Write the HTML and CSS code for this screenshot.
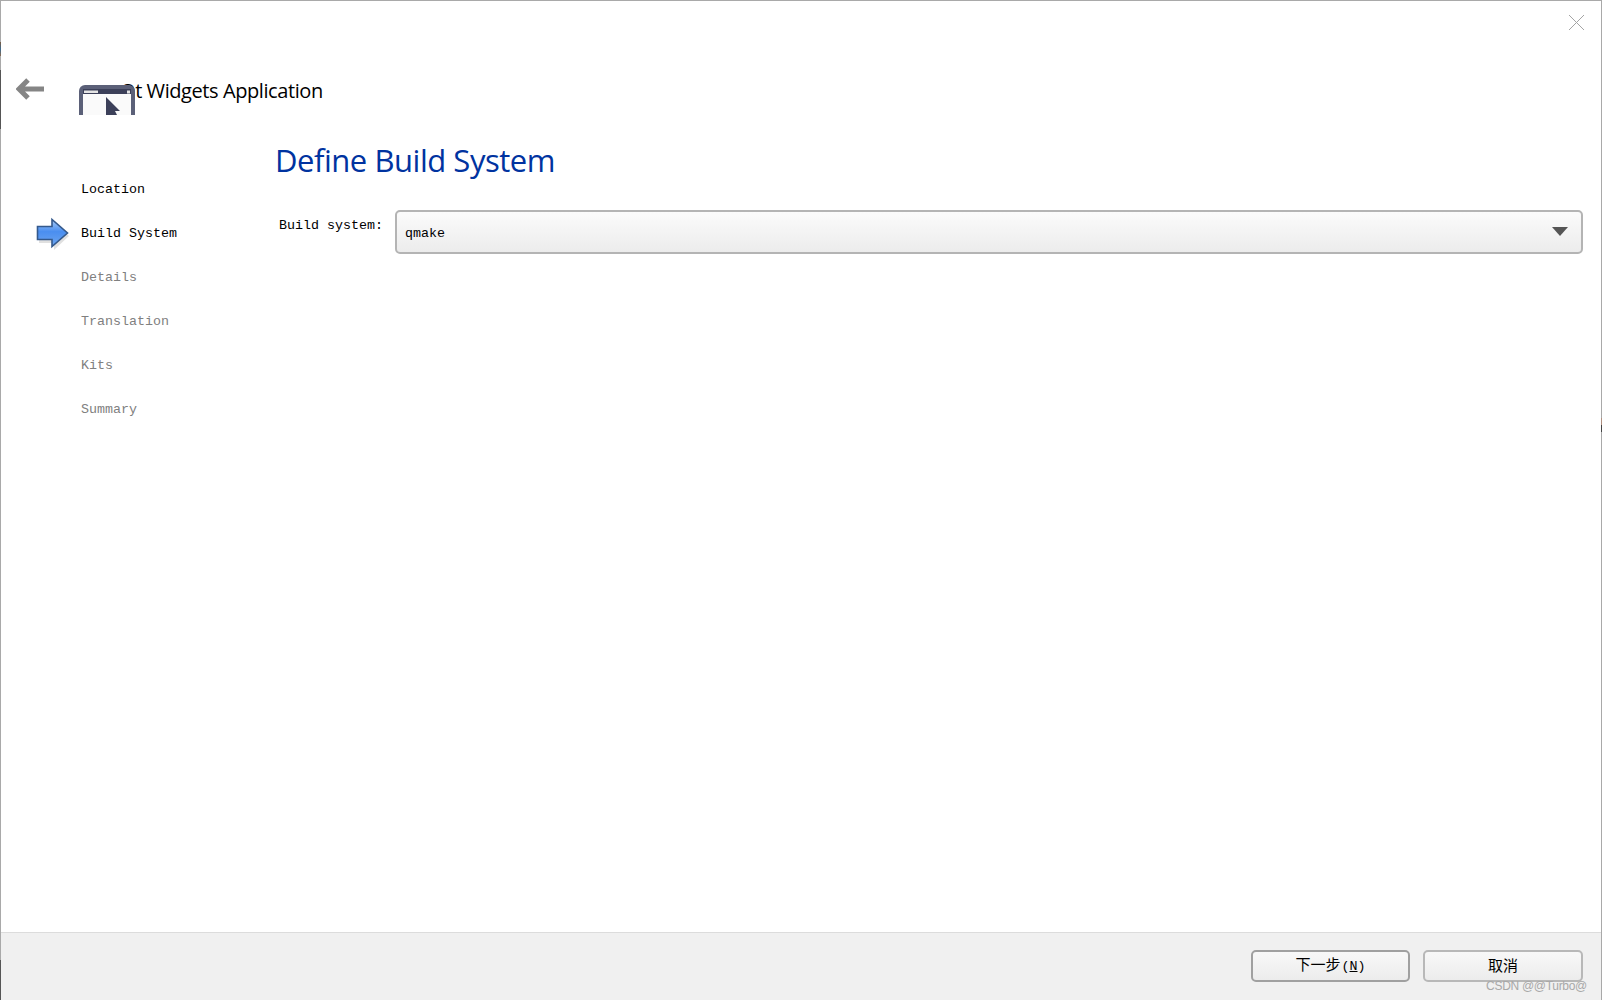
FILE: index.html
```html
<!DOCTYPE html>
<html lang="en">
<head>
<meta charset="utf-8">
<title>Qt Widgets Application</title>
<link rel="stylesheet" href="styles.css">
</head>
<body>
<div class="window">
  <header class="topbar">
    <button class="close" aria-label="Close">
      <svg width="17" height="17" viewBox="0 0 17 17"><path d="M1 1l15 15M16 1L1 16" stroke="#a4a4a4" stroke-width="1" fill="none"/></svg>
    </button>
  </header>
  <div class="titlebar">
    <svg class="back" width="28" height="22" viewBox="0 0 28 22"><path d="M12 2L3 11l9 9M4 11h24" stroke="#858585" stroke-width="5" fill="none"/></svg>
    <div class="wizard-title">
      <span class="title-text">Qt Widgets Application</span>
      <svg class="app-icon" width="56" height="30" viewBox="0 0 56 30">
        <path d="M0 30V6a6 6 0 0 1 6-6h44a6 6 0 0 1 6 6v24z" fill="#5b6078"/>
        <rect x="4" y="9" width="48" height="21" fill="#fafafa"/>
        <rect x="4" y="4" width="48" height="5" fill="#3c4059"/>
        <rect x="5" y="5.5" width="14" height="2.5" fill="#e4e4e4"/>
        <rect x="48" y="5.5" width="3" height="3" fill="#e4e4e4"/>
        <path d="M27 12L41 26H36L38 30H27z" fill="#3c4059"/>
      </svg>
    </div>
  </div>
  <div class="body">
    <nav class="steps">
      <div class="step done">Location</div>
      <div class="step current">
        <svg class="marker" width="36" height="36" viewBox="0 0 36 36">
          <defs><linearGradient id="arrow" x1="0" y1="0" x2="0" y2="1"><stop offset="0" stop-color="#a9ccf7"/><stop offset=".45" stop-color="#4a8ef0"/><stop offset="1" stop-color="#6ea6ef"/></linearGradient></defs>
          <path d="M3 12h15V5l15 14-15 14v-7H3z" fill="#000" opacity=".12"/>
          <path d="M1.5 9.5H16V2.5L31.5 16 16 29.5v-7H1.5z" fill="url(#arrow)" stroke="#34598c" stroke-width="1.6"/>
        </svg>
        Build System
      </div>
      <div class="step todo">Details</div>
      <div class="step todo">Translation</div>
      <div class="step todo">Kits</div>
      <div class="step todo">Summary</div>
    </nav>
    <main class="page">
      <h1 class="page-title">Define Build System</h1>
      <div class="form-row">
        <label class="form-label">Build system:</label>
        <div class="combo">
          <span>qmake</span>
          <span class="combo-arrow"></span>
        </div>
      </div>
    </main>
  </div>
  <footer class="footer">
    <button class="btn btn-default">下一步<span class="mnemonic">(<u>N</u>)</span></button>
    <button class="btn btn-cancel">取消</button>
    <span class="watermark">CSDN @@Turbo@</span>
  </footer>
</div>
</body>
</html>
```
FILE: styles.css
```css
* { box-sizing: border-box; }
html, body { margin: 0; height: 100%; }
body { background: #fff; overflow: hidden; }
.window {
  width: 1602px; height: 1000px; position: relative;
  display: flex; flex-direction: column;
  border-top: 1px solid #a9a9a9;
  border-left: 1px solid #a9a9a9;
  border-right: 1px solid #a9a9a9;
  background: #fff;
}
.window::before {
  content: ""; position: absolute; left: -1px; top: 0; width: 1px; height: 999px;
  background: linear-gradient(#a9a9a9 41px, #7a5a40 41px, #3a6a90 48px, #8a6a50 55px, #a9a9a9 55px, #a9a9a9 69px, #555 69px, #555 128px, #a9a9a9 128px, #a9a9a9 959px, #555 959px);
}
.window::after {
  content: ""; position: absolute; right: -1px; top: 0; width: 1px; height: 999px;
  background: linear-gradient(#a9a9a9 417px, #b09080 417px, #b09080 424px, #444 424px, #444 431px, #a9a9a9 431px);
}
.topbar { height: 60px; display: flex; justify-content: flex-end; flex: none; }
.close { width: 17px; height: 17px; margin: 13px 16px 0 0; padding: 0; border: 0; background: none; display: flex; }
.titlebar { height: 54px; flex: none; display: flex; align-items: flex-start; padding-left: 15px; }
.back { margin-top: 17px; flex: none; }
.wizard-title { position: relative; margin-left: 35px; height: 54px; width: 300px; }
.title-text {
  position: absolute; left: 41px; top: 16px;
  font: 20px/28px "Open Sans", "Noto Sans", sans-serif; color: #000; white-space: nowrap; letter-spacing: -.42px;
}
.app-icon { position: absolute; left: 0; top: 24px; }
.body { flex: 1; display: flex; min-height: 0; }
.steps { width: 275px; flex: none; padding: 65px 0 0 80px; font: 13.33px/20px "Liberation Mono", monospace; }
.step { height: 20px; margin-bottom: 24px; position: relative; white-space: nowrap; }
.done, .current { color: #000; }
.todo { color: #808080; }
.marker { position: absolute; left: -45px; top: -7px; }
.page { flex: 1; min-width: 0; padding-right: 18px; }
.page-title { margin: 23px 0 0 -1px; font: 400 31px/44px "Open Sans", "Noto Sans", sans-serif; color: #0033a0; letter-spacing: -.46px; }
.form-row { display: flex; align-items: flex-start; margin-top: 28px; }
.form-label { font: 13.33px/20px "Liberation Mono", monospace; color: #000; width: 119px; flex: none; padding: 6px 0 0 3px; height: 26px; }
.combo {
  flex: 1; height: 44px; display: flex; align-items: center; justify-content: space-between;
  padding: 3px 13px 0 8px;
  border: 2px solid #b4b4b4; border-radius: 5px;
  background: linear-gradient(#fbfbfb, #ececec);
  font: 13.33px/20px "Liberation Mono", monospace; color: #000;
}
.combo-arrow { width: 0; height: 0; border-left: 8px solid transparent; border-right: 8px solid transparent; border-top: 9px solid #555; margin-top: -4px; }
.footer {
  height: 68px; flex: none; position: relative;
  display: flex; justify-content: flex-end; gap: 13px; padding: 17px 18px 0 0;
  background: #f0f0f0; border-top: 1px solid #dcdcdc;
}
.btn {
  width: 159px; height: 32px; padding: 0 0 3px;
  border: 2px solid #b8b8b8; border-radius: 5px;
  background: linear-gradient(#f8f8f8, #ececec);
  font: 15px/22px "Noto Sans CJK SC", "Liberation Mono", monospace; color: #000;
}
.btn-default { border-color: #a0a0a0; }
.btn-cancel { width: 160px; }
.mnemonic { font: 13.33px/20px "Liberation Mono", monospace; margin-left: 1px; }
.watermark {
  position: absolute; right: 14px; bottom: 5px;
  font: 12px/18px "Liberation Sans", sans-serif; color: #a8a8a8; white-space: nowrap; letter-spacing: -.3px;
}
```
